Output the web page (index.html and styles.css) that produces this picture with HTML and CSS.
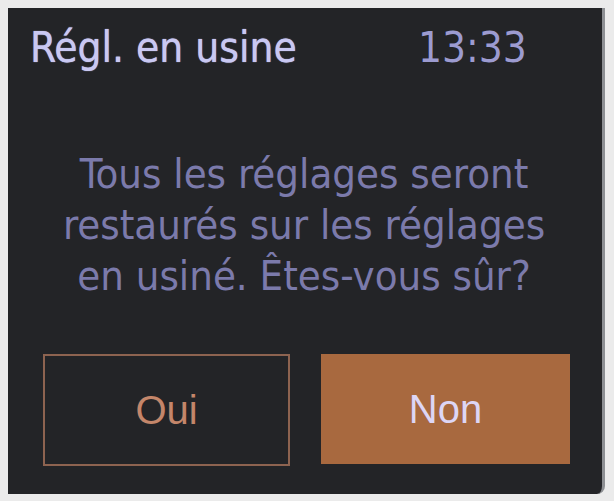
FILE: index.html
```html
<!DOCTYPE html>
<html lang="fr">
<head>
<meta charset="utf-8">
<title>Régl. en usine</title>
<link rel="stylesheet" href="styles.css">
</head>
<body>
<div class="screen">
  <div class="header">
    <span class="title">Régl. en usine</span>
    <span class="time">13:33</span>
  </div>
  <div class="message">
    <div>Tous les réglages seront</div>
    <div>restaurés sur les réglages</div>
    <div>en usiné. Êtes-vous sûr?</div>
  </div>
  <div class="buttons">
    <div class="btn btn-yes">Oui</div>
    <div class="btn btn-no">Non</div>
  </div>
</div>
</body>
</html>
```
FILE: styles.css
```css
html, body {
  margin: 0;
  padding: 0;
}
body {
  background: #ebebeb;
  width: 614px;
  height: 501px;
  overflow: hidden;
  font-family: "DejaVu Sans Condensed", "DejaVu Sans", sans-serif;
}
.screen {
  margin: 8px 0 0 8px;
  width: 597px;
  height: 486px;
  box-sizing: border-box;
  background: #232427;
  border-right: 3px solid #8d8f93;
  border-radius: 0 0 8px 0;
  padding-top: 15px;
  display: flex;
  flex-direction: column;
}
.header {
  display: flex;
  align-items: baseline;
  padding-left: 22px;
  font-size: 42px;
}
.title {
  color: #c9c8f2;
  width: 388px;
  text-shadow: 0 0 1px #c9c8f2;
}
.time {
  color: #9c9bd0;
}
.message {
  margin-top: 76px;
  text-align: center;
  font-size: 41.5px;
  line-height: 51px;
  color: #7b7aab;
  padding-right: 2px;
}
.buttons {
  display: flex;
  gap: 31px;
  margin-top: 53px;
  padding-left: 35px;
}
.btn {
  display: flex;
  align-items: center;
  justify-content: center;
  font-family: "Liberation Sans", Arial, sans-serif;
  font-size: 40px;
  box-sizing: border-box;
}
.btn-yes {
  width: 247px;
  height: 112px;
  border: 2px solid #8d6350;
  color: #c4866a;
}
.btn-no {
  width: 249px;
  height: 110px;
  background: #a8693f;
  color: #ddd6f5;
}
```
